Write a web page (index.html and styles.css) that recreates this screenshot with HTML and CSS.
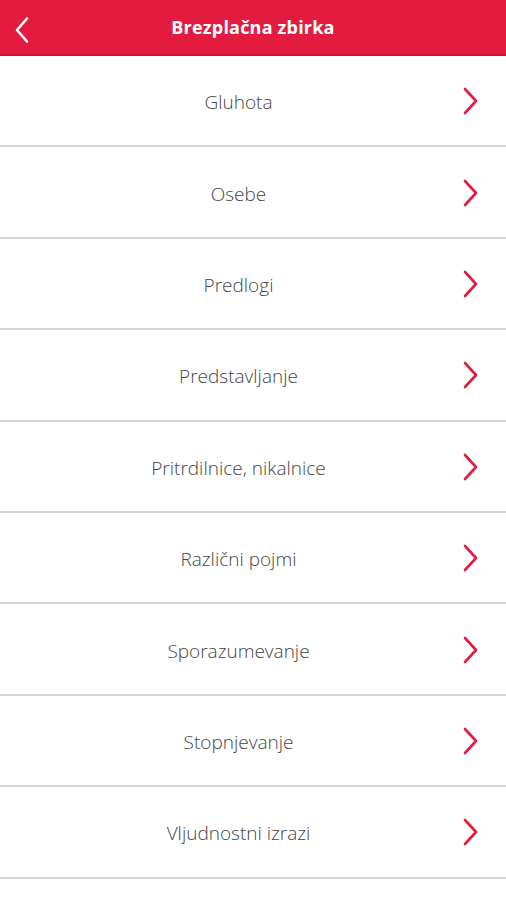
FILE: index.html
```html
<!DOCTYPE html>
<html lang="sl">
<head>
    <meta charset="UTF-8">
    <meta name="viewport" content="width=device-width, initial-scale=1.0">
    <title>Brezplačna zbirka</title>
    <link rel="stylesheet" href="styles.css">
</head>
<body>
<div class="header">
    <a class="back" href="#">
        <svg width="16" height="28" viewBox="0 0 16 28"><path d="M13 2.5 L3 14 L13 25.5" fill="none" stroke="#fff" stroke-width="2.6" stroke-linecap="round" stroke-linejoin="round"/></svg>
    </a>
    <h1>Brezplačna zbirka</h1>
</div>
<ul class="list">
    <li><span>Gluhota</span><svg class="arrow" width="18" height="30" viewBox="0 0 18 30"><path d="M3 3 L14 15 L3 27" fill="none" stroke="#e31c3f" stroke-width="2.6" stroke-linecap="round" stroke-linejoin="round"/></svg></li>
    <li><span>Osebe</span><svg class="arrow" width="18" height="30" viewBox="0 0 18 30"><path d="M3 3 L14 15 L3 27" fill="none" stroke="#e31c3f" stroke-width="2.6" stroke-linecap="round" stroke-linejoin="round"/></svg></li>
    <li><span>Predlogi</span><svg class="arrow" width="18" height="30" viewBox="0 0 18 30"><path d="M3 3 L14 15 L3 27" fill="none" stroke="#e31c3f" stroke-width="2.6" stroke-linecap="round" stroke-linejoin="round"/></svg></li>
    <li><span>Predstavljanje</span><svg class="arrow" width="18" height="30" viewBox="0 0 18 30"><path d="M3 3 L14 15 L3 27" fill="none" stroke="#e31c3f" stroke-width="2.6" stroke-linecap="round" stroke-linejoin="round"/></svg></li>
    <li><span>Pritrdilnice, nikalnice</span><svg class="arrow" width="18" height="30" viewBox="0 0 18 30"><path d="M3 3 L14 15 L3 27" fill="none" stroke="#e31c3f" stroke-width="2.6" stroke-linecap="round" stroke-linejoin="round"/></svg></li>
    <li><span>Različni pojmi</span><svg class="arrow" width="18" height="30" viewBox="0 0 18 30"><path d="M3 3 L14 15 L3 27" fill="none" stroke="#e31c3f" stroke-width="2.6" stroke-linecap="round" stroke-linejoin="round"/></svg></li>
    <li><span>Sporazumevanje</span><svg class="arrow" width="18" height="30" viewBox="0 0 18 30"><path d="M3 3 L14 15 L3 27" fill="none" stroke="#e31c3f" stroke-width="2.6" stroke-linecap="round" stroke-linejoin="round"/></svg></li>
    <li><span>Stopnjevanje</span><svg class="arrow" width="18" height="30" viewBox="0 0 18 30"><path d="M3 3 L14 15 L3 27" fill="none" stroke="#e31c3f" stroke-width="2.6" stroke-linecap="round" stroke-linejoin="round"/></svg></li>
    <li><span>Vljudnostni izrazi</span><svg class="arrow" width="18" height="30" viewBox="0 0 18 30"><path d="M3 3 L14 15 L3 27" fill="none" stroke="#e31c3f" stroke-width="2.6" stroke-linecap="round" stroke-linejoin="round"/></svg></li>
</ul>
</body>
</html>
```
FILE: styles.css
```css
* {
    margin: 0;
    padding: 0;
    box-sizing: border-box;
}

body {
    background: #fff;
    font-family: "Open Sans", "Noto Sans", sans-serif;
}

.header {
    height: 56px;
    background: #e31c3f;
    border-bottom: 2px solid #d5102f;
    display: flex;
    align-items: center;
    justify-content: center;
    position: relative;
}

.header h1 {
    color: #fff;
    font-size: 18px;
    font-weight: 700;
    letter-spacing: 0.2px;
}

.back {
    position: absolute;
    left: 14px;
    top: 16px;
    display: block;
    height: 28px;
}

.list {
    list-style: none;
}

.list li {
    height: 91.4px;
    border-bottom: 2px solid #d4d4d4;
    display: flex;
    align-items: center;
    padding: 3px 0 0 0;
}

.list span {
    flex: 1;
    text-align: center;
    font-size: 19px;
    font-weight: 300;
    color: #444;
    padding-left: 23px;
}

/* red chevron on the right */
.arrow {
    flex: none;
    margin: -2px 26px 0 8px;
}
```
